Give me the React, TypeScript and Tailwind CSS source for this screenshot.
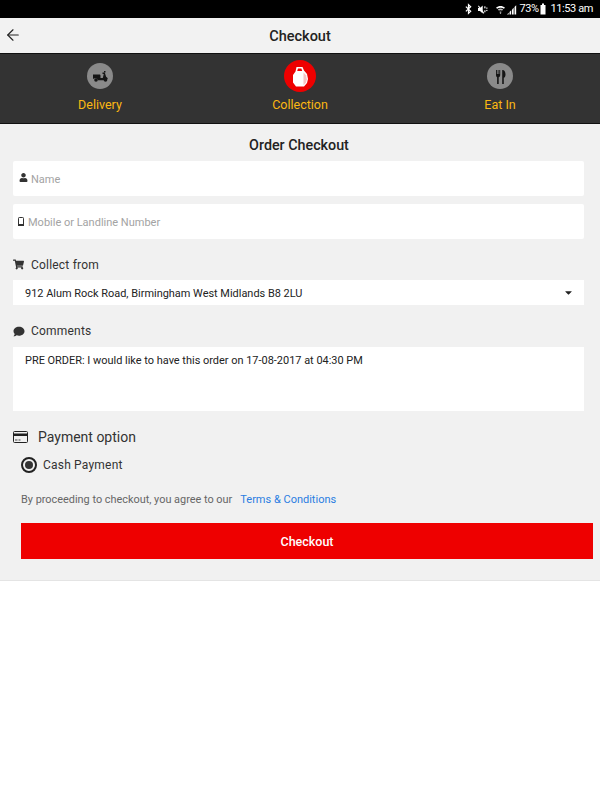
import React from 'react';
import { ArrowLeft } from 'lucide-react';
import { FaUser, FaShoppingCart, FaComment, FaCaretDown } from 'react-icons/fa';

const ScooterIcon = () => (
  <svg viewBox="0 0 26 26" className="w-[26px] h-[26px]" fill="#151515">
    <path d="M6 11.500h6.500c.8 0 1 .6 1 1.400v2.100h2.300l1-4h-1.300v-1.500h2.300l1.300 4.300c1 .4 1.600 1.200 1.700 2.400h-3l-.8 1h-6c-.4-1.300-1.300-2-2.700-2-1.100 0-1.800.3-2.300.8v-2.500z" />
    <circle cx="9" cy="17" r="1.800" />
    <circle cx="18.500" cy="17" r="1.800" />
    <rect x="17" y="8" width="1.500" height="1.500" />
  </svg>
);

const BagIcon = () => (
  <svg viewBox="0 0 32 32" className="w-[32px] h-[32px]">
    <path
      fill="#fff"
      fillRule="evenodd"
      d="M12.500 7h6l1.500 3.500 3 3.500 1 5-1 4-3 3.500H12l-3-4v-7.500l2.500-3.500zM14 8.500l-.8 2.500h5l-.8-2.500z"
    />
    <path fill="#f6c4c4" d="M19.500 12.500l2.500 2.800.8 3.900-.8 3.300-2.500 2.800z" />
  </svg>
);

const CutleryIcon = () => (
  <svg viewBox="0 0 26 26" className="w-[26px] h-[26px]" fill="#151515">
    <path d="M9 7h.9v4h.8V7h.8v4h.8V7h.9v5c0 1.200-.6 2-1.500 2.300V21h-1.600v-6.700C9.600 14 9 13.200 9 12z" />
    <path d="M16 7c1.600.3 2.500 2.400 2.500 4.500 0 1.900-.7 3-1.700 3.300V21H15.200V7.200c.2-.1.500-.2.800-.2z" />
  </svg>
);

const CardIcon = () => (
  <svg viewBox="0 0 15 12" className="w-[15px] h-[12px]">
    <rect x="0.500" y="0.500" width="14" height="11" rx="1" fill="#f1f1f1" stroke="#222" />
    <rect x="1" y="2.500" width="13" height="2.500" fill="#222" />
    <rect x="2" y="8.500" width="2.500" height="1" fill="#444" />
    <rect x="5.500" y="8.500" width="2" height="1" fill="#444" />
  </svg>
);

const MobileIcon = () => (
  <svg viewBox="0 0 6 9" className="w-[6px] h-[9px]">
    <rect x="0.500" y="0.500" width="5" height="8" rx="0.800" fill="#fff" stroke="#333" />
    <rect x="0" y="7" width="6" height="2" fill="#333" />
  </svg>
);

const StatusIcons = () => (
  <>
    {/* bluetooth */}
    <svg viewBox="0 0 8 12" className="w-[7px] h-[12px] mr-[6px]" fill="none" stroke="#fff" strokeWidth="1.400">
      <path d="M1 3.300l5.500 5.200L4 11V1l2.500 2.500L1 8.700" />
    </svg>
    {/* muted */}
    <svg viewBox="0 0 14 12" className="w-[11px] h-[11px] mr-[7px]" fill="#fff">
      <path d="M0 4h2.500L6 1v10L2.500 8H0z" />
      <path d="M1 1l7 9.500-1 .8L0 2z" />
      <rect x="8" y="2" width="1.500" height="2.500" />
      <rect x="8" y="7" width="1.500" height="2.500" />
      <rect x="10.500" y="3.500" width="1.500" height="1.500" />
      <rect x="10.500" y="6.500" width="1.500" height="1.500" />
    </svg>
    {/* wifi */}
    <svg viewBox="0 0 12 12" className="w-[9px] h-[11px] mr-[2px]">
      <path d="M0 3.500C3.500.5 8.500.5 12 3.500L10.500 5C8 3 4 3 1.500 5z" fill="#fff" />
      <path d="M2.500 6C4.700 4.300 7.300 4.300 9.500 6L8 7.500c-1.300-.8-2.700-.8-4 0z" fill="#bbb" />
      <path d="M4.800 8.500h2.400L6.700 12H5.300z" fill="#999" />
    </svg>
    {/* signal */}
    <svg viewBox="0 0 12 12" className="w-[10px] h-[11px] mr-[3px]" fill="#fff">
      <path d="M0 12h2V10L0 12z" />
      <path d="M3 12h2V7L3 9z" />
      <path d="M6 12h2V4L6 6z" />
      <path d="M9 12h2V1L9 3z" />
    </svg>
    <span className="tracking-[-0.500px]">73%</span>
    <svg viewBox="0 0 6 12" className="w-[6px] h-[12px] ml-[2px] mr-[4px]" fill="#fff">
      <rect x="2" y="0.500" width="2" height="1.500" />
      <rect x="0.500" y="2" width="5" height="9.500" />
    </svg>
    <span className="tracking-[-0.400px]">11:53 am</span>
  </>
);

const Tab = ({ label, active, children }: { label: string; active?: boolean; children: React.ReactNode }) => (
  <div className="flex flex-col items-center w-[200px]">
    <div className="h-[32px] flex items-center justify-center">
      <div
        className={`rounded-full flex items-center justify-center ${active ? 'w-[32px] h-[32px] bg-[#ee0000]' : 'w-[26px] h-[26px] bg-[#8a8a8a]'}`}
      >
        {children}
      </div>
    </div>
    <span className="mt-[5px] text-[12.500px] leading-[16px] text-[#fcb812]">{label}</span>
  </div>
);

const App: React.FC = () => {
  return (
    <div className="w-[600px] h-[800px] bg-white font-['Roboto',sans-serif] overflow-hidden">
      {/* status bar */}
      <div className="h-[18px] bg-black flex items-center justify-end pr-[7px] text-white text-[11px] leading-[18px]">
        <StatusIcons />
      </div>

      {/* title bar */}
      <div className="h-[35px] bg-[#f2f2f2] flex items-center relative">
        <ArrowLeft className="absolute left-[4px] top-[8px] w-[18px] h-[18px] text-[#222]" strokeWidth={1.500} />
        <div className="w-full text-center text-[14.500px] font-medium text-[#222] pt-[2px]">Checkout</div>
      </div>

      {/* order type tabs */}
      <div className="h-[71px] bg-[#333333] border-y border-[#111] flex pt-[6px]">
        <Tab label="Delivery">
          <ScooterIcon />
        </Tab>
        <Tab label="Collection" active>
          <BagIcon />
        </Tab>
        <Tab label="Eat In">
          <CutleryIcon />
        </Tab>
      </div>

      {/* form */}
      <div className="h-[457px] bg-[#f1f1f1] border-b border-[#e4e4e4] pt-[13px]">
        <h2 className="text-center text-[14.300px] leading-[16px] font-medium text-[#222] pr-[2px]">Order Checkout</h2>

        <div className="mx-[13px] w-[571px] mt-[8px] h-[35px] bg-white rounded-[2px] flex items-center pl-[6px]">
          <FaUser className="w-[9px] h-[9px] text-[#333] mb-[2px]" />
          <span className="ml-[3px] pt-[4px] text-[11px] text-[#a3a3a3]">Name</span>
        </div>
        <div className="mx-[13px] w-[571px] mt-[8px] h-[35px] bg-white rounded-[2px] flex items-center pl-[5px]">
          <MobileIcon />
          <span className="ml-[4px] pt-[4px] text-[11px] text-[#a3a3a3]">Mobile or Landline Number</span>
        </div>

        <div className="ml-[13px] mt-[17px] h-[16px] flex items-center text-[12px] text-[#333]">
          <FaShoppingCart className="w-[11px] h-[11px] text-[#333]" />
          <span className="ml-[7px] pt-[2px] tracking-[0.200px]">Collect from</span>
        </div>

        <div className="mx-[13px] w-[571px] mt-[8px] h-[25px] bg-white flex items-center justify-between pl-[12px] pr-[10px]">
          <span className="pt-[4px] text-[10.950px] text-[#222]">912 Alum Rock Road, Birmingham West Midlands B8 2LU</span>
          <FaCaretDown className="w-[11px] h-[11px] text-[#222]" />
        </div>

        <div className="ml-[13px] mt-[18px] h-[16px] flex items-center text-[12px] text-[#333]">
          <FaComment className="w-[12px] h-[11px] text-[#333]" />
          <span className="ml-[6px] tracking-[0.200px]">Comments</span>
        </div>

        <div className="mx-[13px] w-[571px] mt-[8px] h-[64px] bg-white pl-[12px] pt-[7px] text-[10.950px] leading-[14px] text-[#222]">
          PRE ORDER: I would like to have this order on 17-08-2017 at 04:30 PM
        </div>

        <div className="ml-[13px] mt-[18px] h-[16px] flex items-center">
          <CardIcon />
          <span className="ml-[10px] text-[14px] text-[#333]">Payment option</span>
        </div>

        <div className="ml-[21px] mt-[12px] h-[16px] flex items-center">
          <span className="w-[16px] h-[16px] rounded-full border-2 border-[#222] flex items-center justify-center">
            <span className="w-[8px] h-[8px] rounded-full bg-[#333]" />
          </span>
          <span className="ml-[6px] text-[12px] text-[#333] tracking-[0.200px]">Cash Payment</span>
        </div>

        <div className="ml-[21px] mt-[19px] h-[16px] flex items-center text-[10.900px]">
          <span className="text-[#666]">By proceeding to checkout, you agree to our</span>
          <span className="ml-[8px] text-[#2a7de1] text-[11px]">Terms &amp; Conditions</span>
        </div>

        <button className="block ml-[21px] mt-[15px] w-[572px] h-[36px] pt-[2px] bg-[#ee0000] text-white text-[12.500px] font-medium text-center">
          Checkout
        </button>
      </div>
    </div>
  );
};

export default App;
